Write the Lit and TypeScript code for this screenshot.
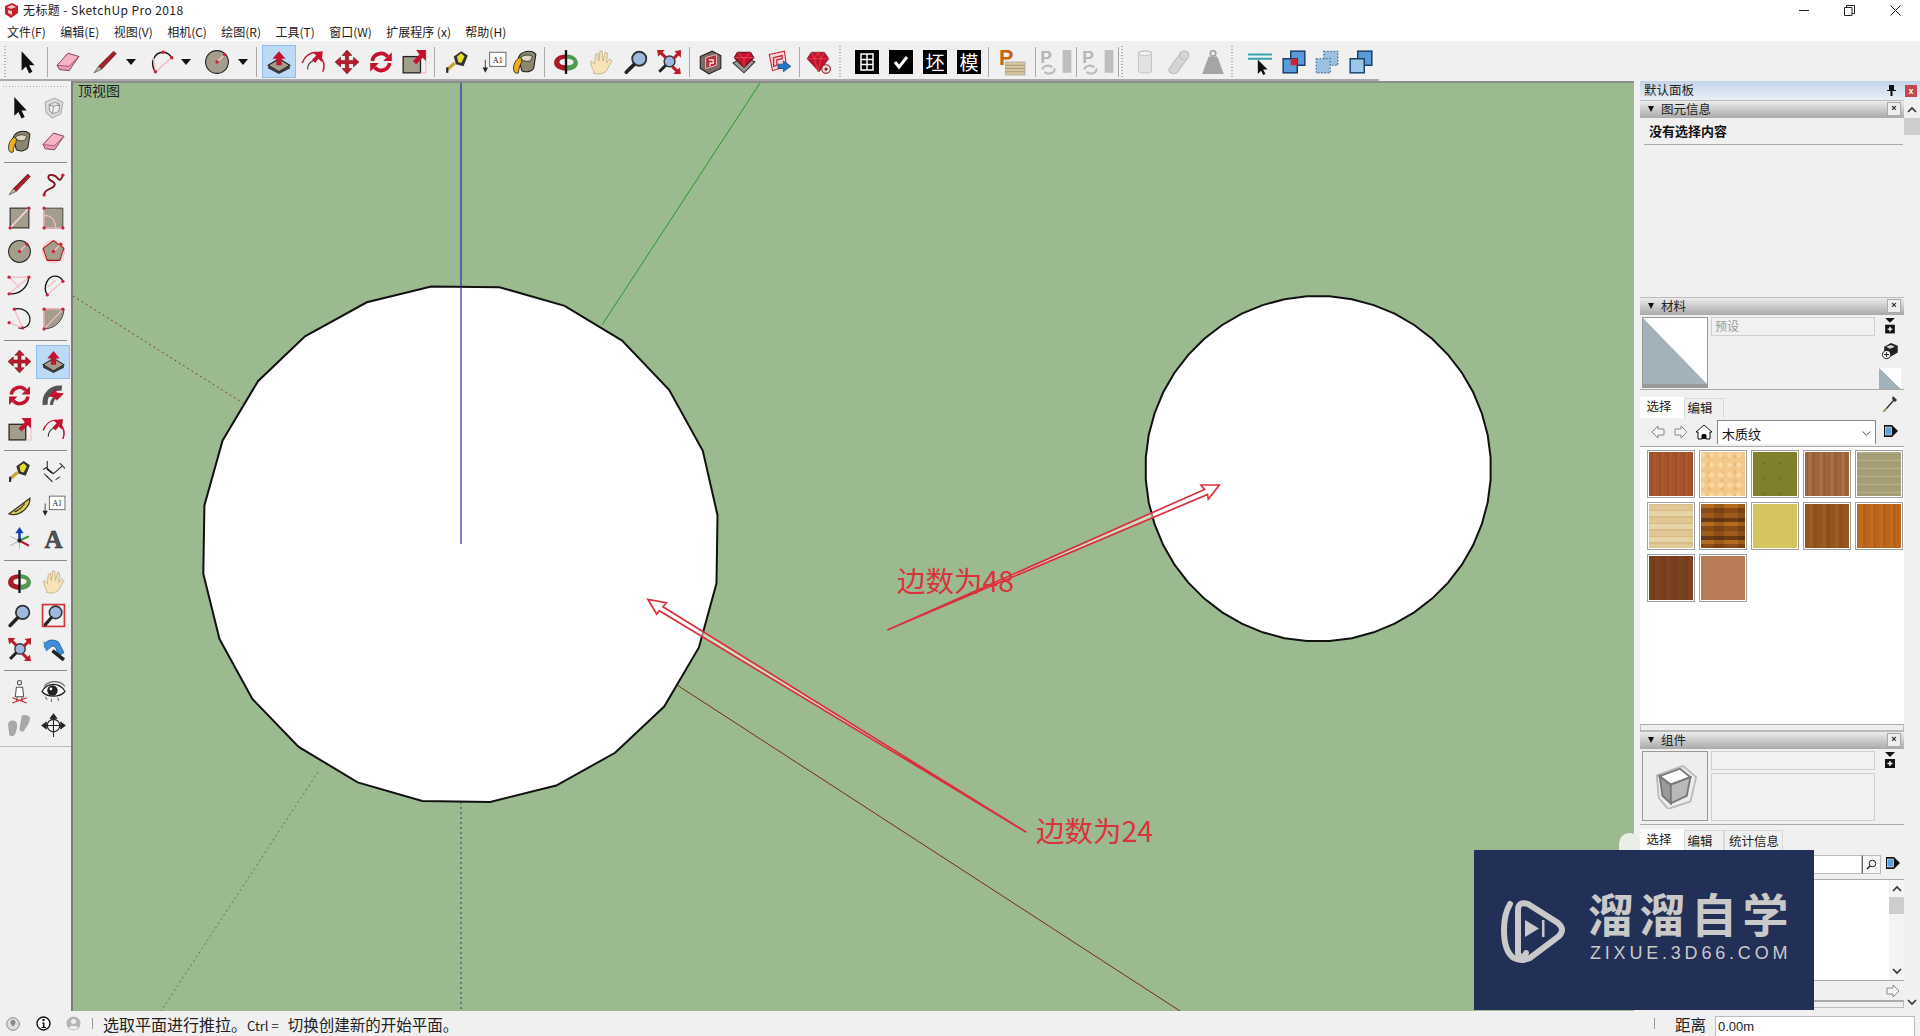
// app.ts
// SketchUp Pro 2018 main window: toolbars, top view canvas, default tray, status bar

import { LitElement, html, svg, css, TemplateResult } from 'lit';
import { customElement } from 'lit/decorators.js';

const RED = '#c4122f';
const PINK = '#f6b9c4';
const FACE = '#a39e8c';

const dot = (x: number, y: number) => svg`<circle cx=${x} cy=${y} r="1.6" fill="#d0203a"/>`;

const ICONS: Record<string, TemplateResult> = {
  select: svg`<path d="M7 2v18l4-3.8 3 6.3 3-1.4-3-6.2h5z" fill="#111"/>`,
  component: svg`<path d="M4 7l9-4 8 4-2 11-8 4-6-5z" fill="#ddd" stroke="#aaa"/><path d="M8 9l6-2 4 2-1 7-6 2-3-3zM8 9l4 2 6-2M12 11l-1 7" fill="#eee" stroke="#999"/>`,
  eraser: svg`<path d="M2 15L12 4l10 3-9 13-9-1z" fill="#f29ab3" stroke="#6e3442" stroke-width=".8"/><path d="M2 15L12 4l10 3-9 9z" fill="#f7b3c6" stroke="#6e3442" stroke-width=".6"/>`,
  pencil: svg`<path d="M20 2l2.4 2.4L9 18.5 6 16z" fill="#ae1f2b" stroke="#3a1015" stroke-width=".6"/><path d="M6 16l3 2.5L2 22z" fill="#cdb89c" stroke="#333" stroke-width=".6"/>`,
  freehand: svg`<path d="M3 22c0-6 8-5 10-9s-6-4-6-8 7-2 9 1 4 1 5-3" fill="none" stroke="#7f1822" stroke-width="1.800"/>${dot(3, 22)}${dot(21, 3)}`,
  arc: svg`<path d="M6 21C0 13 5 3 13 3c3 0 6 2 8 5" fill="none" stroke="#111" stroke-width="1.3"/><path d="M6 21L21 8" stroke=${PINK} stroke-width="1.4"/><path d="M6 21L4 8" stroke=${PINK}/>${dot(6, 21)}${dot(21, 8)}${dot(13, 3)}`,
  circle: svg`<circle cx="12" cy="12" r="10.5" fill=${FACE} stroke="#222" stroke-width="1"/><path d="M12 12L19 5" stroke=${PINK} stroke-width="1.5"/>${dot(12, 12)}${dot(19, 5)}`,
  polygon: svg`<circle cx="12" cy="12" r="10.5" fill="none" stroke=${PINK}/><path d="M12 1.5l10 7.500-4 11.500H6L2 9z" fill=${FACE} stroke="#a11"/><path d="M12 12L19 5" stroke=${PINK} stroke-width="1.5"/>${dot(12, 12)}${dot(19, 5)}`,
  rect: svg`<rect x="3" y="3" width="18" height="19" fill=${FACE} stroke="#222"/><path d="M3 22L21 3" stroke="#fbd0d8" stroke-width="1.6"/>${dot(3, 22)}${dot(21, 3)}`,
  rotrect: svg`<path d="M3 3h18v19H3z" fill=${FACE} stroke="#222" stroke-width=".7"/><path d="M3 10c7 0 11 5 11 12h7M3 3v19h11" fill="none" stroke=${PINK} stroke-width="1.2"/>${dot(3, 3)}${dot(3, 22)}${dot(21, 22)}`,
  arc1: svg`<path d="M2 20c10 1 18-6 19-16" fill="none" stroke="#111" stroke-width="1.2"/><path d="M2 20L21 4M2 4h19M2 4l10 10" stroke=${PINK} stroke-width="1.2"/>${dot(2, 4)}${dot(21, 4)}${dot(2, 20)}`,
  arc2: svg`<path d="M6 21C1 13 7 3 13 3c4 0 7 2 8 5" fill="none" stroke="#111" stroke-width="1.3"/><path d="M6 21L21 8M6 14l8-7" stroke=${PINK} stroke-width="1.2"/>${dot(6, 21)}${dot(21, 8)}`,
  arc3: svg`<path d="M7 3c8-2 15 3 15 10s-6 9-11 8" fill="none" stroke="#111" stroke-width="1.2"/><path d="M7 3l8 18M2 16l13 5" stroke=${PINK} stroke-width="1.2"/>${dot(7, 3)}${dot(15, 21)}${dot(2, 16)}`,
  pie: svg`<path d="M3 22V3h19c0 10-8 19-19 19z" fill=${FACE} stroke="#222" stroke-width=".7"/><path d="M3 22L21 3M3 3h19M3 3v19" stroke=${PINK} stroke-width="1.2"/>${dot(3, 3)}${dot(21, 3)}${dot(3, 22)}`,
  move: svg`<path d="M12 1l4.500 5h-3v4.500H18v-3l5 4.500-5 4.500v-3h-4.500V18h3L12 23l-4.500-5h3v-4.500H6v3L1 12l5-4.500v3h4.500V6h-3z" fill="#b81c2a" stroke="#5a0e14" stroke-width=".5"/>`,
  pushpull: svg`<path d="M2 15l10-6 10 6-10 6z" fill=${FACE} stroke="#222"/><path d="M2 15v3l10 5 10-5v-3l-10 6z" fill="#3a3a3a"/><path d="M12 2l6 7h-3.500v6h-5V9H6z" fill=${RED}/>`,
  rotate: svg`<path d="M4 11a8 8 0 0 1 14-4" fill="none" stroke=${RED} stroke-width="3.400"/><path d="M22 3v8h-8z" fill=${RED}/><path d="M20 13a8 8 0 0 1-14 4" fill="none" stroke=${RED} stroke-width="3.400"/><path d="M2 21v-8h8z" fill=${RED}/>`,
  followme: svg`<path d="M4 21C3 11 10 4 20 5" fill="none" stroke="#555" stroke-width="5"/><path d="M10 21c0-4 3-8 7-9" fill="none" stroke="#555" stroke-width="3"/><path d="M7 13l7-8 1 4 7 1-7 7-1-3z" fill=${RED}/>`,
  offset: svg`<path d="M2 13C4 7 9 3 15 3" fill="none" stroke=${RED} stroke-width="1.4"/><path d="M7 19c0-4 2-7 5-8" fill="none" stroke="#333"/><path d="M21 21c2-5 1-10-2-13" fill="none" stroke=${RED} stroke-width="1.4"/><path d="M21 2l-1 10-3-3-3 4-3-3 4-4-3-3z" fill=${RED}/>`,
  scale: svg`<rect x="2" y="7" width="16" height="15" fill=${FACE} stroke="#222" stroke-width="1.200"/><path d="M18 2h5v20h-5" fill="none" stroke=${PINK}/><path d="M23 1v10l-3-3-6 6-3-3 6-6-3-4z" fill=${RED}/>`,
  tape: svg`<path d="M9 7l7-5 6 4-4 10-7-2z" fill="#333"/><path d="M12 7l4-3 3 3-3 6-3-1z" fill="#e6de2c"/><path d="M10 13l-7 6" stroke="#c9a42c" stroke-width="3"/><path d="M3 17v5" stroke="#222" stroke-width="2"/>`,
  text: svg`<rect x="8" y="3" width="15" height="13" fill="#fff" stroke="#555" stroke-width=".8"/><text x="15.500" y="12.500" font-size="7.500" text-anchor="middle" font-family="Liberation Serif, serif" fill="#111">A1</text><path d="M4 10v8" stroke="#555"/><path d="M1.500 17h5L4 22z" fill="#222"/>`,
  paint: svg`<path d="M6 8c2-6 12-8 16-3l-2 13c-2 3-7 4-11 2z" fill="#8c8670" stroke="#222"/><path d="M8 8c3-3 8-3 11-1l-2 4c-3 1-6 0-8-1z" fill="#ddd8c0" stroke="#222" stroke-width=".7"/><path d="M2 21C0 15 4 9 7 8c3 0 2 4 1 6-1 2-2 5-2 8-2 1-3 0-4-1z" fill="#f0ae1e" stroke="#222" stroke-width=".8"/>`,
  orbit: svg`<path d="M12 5C4 5 1 9 1 13c0 4 5 7 11 7v-5c-4 0-6-1-6-3s3-3 6-3z" fill="#a81c28"/><path d="M13 5c6 0 10 4 10 8s-4 7-10 7v-5c4 0 6-1 6-3s-3-3-6-3z" fill="#4f9a50"/><path d="M12 1v22" stroke="#111" stroke-width="2.200"/>`,
  pan: svg`<path d="M6 22C3 16 2 13 3 11l3 3 1-9 2-1 1 7 1-9 2 0 1 9 2-8 2 1-1 9 3-4 2 2-5 9c-2 3-10 4-12 2z" fill="#f7e3b8" stroke="#b9a680" stroke-width=".7"/>`,
  zoom: svg`<circle cx="15" cy="9" r="6.500" fill="#9db9dd" stroke="#333" stroke-width="1.700"/><path d="M10 14.500L3 21.500" stroke="#222" stroke-width="3.400" stroke-linecap="round"/>`,
  zoomwin: svg`<rect x="1.500" y="1.500" width="21" height="21" fill="none" stroke="#d0343c" stroke-width="1.600"/><circle cx="14" cy="9" r="6" fill="#9db9dd" stroke="#333" stroke-width="1.500"/><path d="M10 14L4 21" stroke="#222" stroke-width="3" stroke-linecap="round"/>`,
  zoomext: svg`<circle cx="12.500" cy="11.500" r="5" fill="#9db9dd" stroke="#333" stroke-width="1.300"/><path d="M9 15l-6 6" stroke="#222" stroke-width="2.800"/><path d="M1 1h7L6 3l4 4-2 2-4-4-2 2zM23 1v7l-2-2-4 4-2-2 4-4-2-2zM23 23h-7l2-2-4-4 2-2 4 4 2-2z" fill="#b81c2a"/>`,
  prev: svg`<path d="M3 9c0-6 9-8 14-4l5 10-5 3-3-8c-3-2-6-2-9 2z" fill="#3f8fd8" stroke="#1c4f80" stroke-width=".7"/><path d="M2 4l3 10 6-5z" fill="#3f8fd8"/><path d="M11 13l11 9" stroke="#222" stroke-width="3.500"/>`,
  wh1: svg`<path d="M3 7l11-5 8 4v12l-11 5-8-5z" fill="#7a6a64" stroke="#222"/><path d="M8 8l10-3v10l-10 3z" fill="#b5303a" stroke="#ecc" stroke-width=".8"/><path d="M11 10h4v3h-3v3" fill="none" stroke="#fff"/>`,
  wh2: svg`<path d="M2 13l10-6 10 5-10 10z" fill="#999" stroke="#333"/><path d="M6 3h12l3 5-9 9-9-9z" fill="#c4122f" stroke="#5a0e14"/><path d="M6 3l6 6 6-6M3 8h18M12 9v8" stroke="#e66" stroke-width=".6" fill="none"/>`,
  wh3: svg`<path d="M3 5l14-3 2 14-13 4z" fill="#f7d9dc" stroke="#c23"/><path d="M7 8l8-2v3l-5 1v5l-3 1z" fill="none" stroke="#c23" stroke-width="1.200"/><path d="M11 14h5v-3l7 5-7 5v-3h-5z" fill="#1e78c8" stroke="#0c3c68" stroke-width=".6"/>`,
  ruby: svg`<path d="M5 3h12l4 6-9 12L1 9z" fill=${RED} stroke="#6a0e18" stroke-width=".6"/><path d="M5 3l3 6 3-6 3 6 3-6M1 9h20M8 9l3 12 3-12" stroke="#e55" stroke-width=".6" fill="none"/><circle cx="18.500" cy="18.500" r="4" fill="#ddd" stroke="#922"/><circle cx="18.500" cy="18.500" r="1.500" fill="#922"/>`,
  grid: svg`<rect width="24" height="24" fill="#000"/><path d="M6 4h12v16H6zM6 9.500h12M6 14.500h12M12 4v16" fill="none" stroke="#fff" stroke-width="1.500"/>`,
  check: svg`<rect width="24" height="24" fill="#000"/><path d="M6 12l4 5 8-10" fill="none" stroke="#fff" stroke-width="3"/>`,
  layout: svg`<text x="0" y="15" font-size="20" font-weight="700" fill="#c8620e" font-family="Liberation Sans, sans-serif">P</text><rect x="6" y="12" width="18" height="12" fill="#d9c9a0" stroke="#999" stroke-width=".6"/><path d="M6 15h18M6 18h18M6 21h18" stroke="#a89a78"/>`,
  greyp: svg`<text x="4" y="13" font-size="16" font-weight="700" fill="#b5b5b5" font-family="Liberation Sans, sans-serif">P</text><path d="M6 19a5 4 0 0 1 9-2M17 18a5 4 0 0 1-9 3" fill="none" stroke="#bbb" stroke-width="2"/>`,
  greybar: svg`<rect x="8" y="1" width="8" height="21" fill="#bdbdbd"/>`,
  cyl: svg`<path d="M6 4c0-3 12-3 12 0v16c0 3-12 3-12 0z" fill="#e2e2e2" stroke="#c6c6c6"/><ellipse cx="12" cy="4" rx="6" ry="2" fill="#f4f4f4" stroke="#c6c6c6"/>`,
  capsule: svg`<path d="M3 18L14 3c3-3 8 0 7 4L10 22c-3 2-9 0-7-4z" fill="#d5d5d5" stroke="#bbb"/><path d="M14 3c-2 2-2 6 3 7" fill="none" stroke="#bbb"/>`,
  weight: svg`<circle cx="12" cy="4" r="2.500" fill="none" stroke="#a5a5a5" stroke-width="1.600"/><path d="M8 7h8l6 16H2z" fill="#a5a5a5"/>`,
  section: svg`<path d="M1 5h22M1 9h22" stroke="#35a3ad" stroke-width="1.800"/><path d="M10 10v13l3-3 2 4 2-1-2-4h4z" fill="#111"/>`,
  solid1: svg`<rect x="9" y="2" width="13" height="13" fill="#5a9bd8" stroke="#123a66" stroke-width="1.300"/><rect x="2" y="9" width="13" height="13" fill="#5a9bd8" stroke="#123a66" stroke-width="1.300"/><rect x="9" y="9" width="6" height="6" fill="#d8202e"/>`,
  solid2: svg`<rect x="9" y="2" width="13" height="13" fill="#9cc0e0" stroke="#37648e" stroke-dasharray="1.500"/><rect x="2" y="9" width="13" height="13" fill="#9cc0e0" stroke="#37648e" stroke-dasharray="1.500"/>`,
  solid3: svg`<rect x="9" y="2" width="13" height="13" fill="#5a9bd8" stroke="#123a66" stroke-width="1.300"/><rect x="2" y="9" width="13" height="13" fill="#9cc6ea" stroke="#123a66" stroke-width="1.300"/>`,
  dim: svg`<path d="M6 2v8l5 4M2 10l4-2M5 16l6 6M18 4l5 5M20 7l-8 7-7-6" fill="none" stroke="#222" stroke-width="1"/><path d="M3 14l4 4M18 17l-4 3" stroke="#444"/>`,
  protractor: svg`<path d="M2 20L22 5C22 14 12 23 2 20z" fill="#e0d24a" stroke="#333" stroke-width="1.200"/><path d="M7 18c3 0 8-5 10-8" fill="none" stroke="#333"/>`,
  axes: svg`<path d="M12 13V3" stroke="#1a3fb0" stroke-width="2.500"/><path d="M12 0l4 6H8z" fill="#1a3fb0"/><path d="M12 13l9-4" stroke="#3a9a3a" stroke-width="2"/><path d="M12 13l9 5" stroke="#c4122f" stroke-width="2"/><path d="M12 13l-9-4M12 13l-9 5M12 13v8" stroke="#bbb"/><circle cx="12" cy="13" r="2" fill="#222"/>`,
  text3d: svg`<text x="12" y="20" font-size="24" font-weight="700" text-anchor="middle" fill="#555" stroke="#222" stroke-width=".5" font-family="Liberation Serif, serif">A</text>`,
  walk: svg`<circle cx="12" cy="3.500" r="2" fill="none" stroke="#555"/><path d="M9 8h6l1 9h-8zM10 17l-1 4M14 17l1 4" fill="#fff" stroke="#555"/><path d="M5 18l14 5M19 18L5 23" stroke="#d23"/>`,
  eye: svg`<path d="M1 12C6 3 18 3 23 12c-5 6-17 6-22 0z" fill="#fff" stroke="#222" stroke-width="1.200"/><circle cx="11" cy="11" r="5" fill="#222"/><circle cx="9.500" cy="9.500" r="1.300" fill="#fff"/><path d="M3 7C8 1 18 1 23 7M4 17l2 3M10 19v3M16 18l1 3" fill="none" stroke="#666"/>`,
  feet: svg`<path d="M1 11c0-4 6-5 8-2s0 7-1 11c-1 3-6 3-6 0zM14 3c2-2 8-1 8 2 0 4-3 8-5 11-1 3-5 2-5-1z" fill="#a8a8a8"/>`,
  position: svg`<circle cx="12" cy="12" r="6" fill="none" stroke="#222" stroke-width="1.200"/><path d="M1 12h22M12 1v22M1 12l4-3v6zM23 12l-4-3v6zM12 1l-3 4h6z" fill="#222" stroke="#222"/>`,
};

const icon = (name: string, size = 26) =>
  html`<svg class="ic" width=${size} height=${size} viewBox="0 0 24 24">${ICONS[name]}</svg>`;

// [kind or icon name, slot width]; the slots add up to the 1379px the toolbar spans
const TOP_ITEMS: [string, number][] = [
  ['grip', 10], ['select', 34], ['sep', 6], ['eraser', 36], ['pencil', 38], ['dd', 14], ['gap', 7],
  ['arc', 34], ['dd', 14], ['gap', 7], ['circle', 34], ['dd', 18], ['sep', 8], ['gap', 2],
  ['pushpull', 34], ['offset', 34], ['move', 34], ['rotate', 33], ['scale', 34], ['sep', 6],
  ['tape', 40], ['text', 34], ['paint', 28], ['sep', 10],
  ['orbit', 34], ['pan', 36], ['zoom', 34], ['zoomext', 32], ['sep', 8],
  ['wh1', 34], ['wh2', 34], ['wh3', 36], ['sep', 4], ['ruby', 36], ['grip', 6], ['gap', 7],
  ['grid', 34], ['check', 34], ['坯', 34], ['模', 34], ['sep', 4],
  ['layout', 44], ['sep', 2], ['greyp', 26], ['greybar', 10], ['sep', 8], ['greyp', 22], ['greybar', 14], ['sep', 4],
  ['grip', 4], ['gap', 4], ['cyl', 34], ['capsule', 34], ['weight', 34], ['grip', 4], ['gap', 9],
  ['section', 34], ['solid1', 33], ['solid2', 34], ['solid3', 34],
];

const LEFT_GROUPS: string[][] = [
  ['select', 'component', 'paint', 'eraser'],
  ['pencil', 'freehand', 'rect', 'rotrect', 'circle', 'polygon', 'arc1', 'arc2', 'arc3', 'pie'],
  ['move', 'pushpull', 'rotate', 'followme', 'scale', 'offset'],
  ['tape', 'dim', 'protractor', 'text', 'axes', 'text3d'],
  ['orbit', 'pan', 'zoom', 'zoomwin', 'zoomext', 'prev'],
  ['walk', 'eye', 'feet', 'position'],
];

const MENUS = ['文件(F)', '编辑(E)', '视图(V)', '相机(C)', '绘图(R)', '工具(T)', '窗口(W)', '扩展程序 (x)', '帮助(H)'];

// traced from the reference, in page coordinates
const POLY24 =
  '431.3,286.5 499.4,287.2 564.6,305.8 622.1,340.6 669.1,389.8 702.8,450.8 717.5,515.2 716.5,583.3 ' +
  '698.9,647.4 664.2,706.6 615.1,752.8 556.2,785.5 490.2,802 422.2,801 357.7,782.4 298.7,746.9 ' +
  '252.4,699 219.5,639.1 203.3,573.7 204.4,505.5 222.6,440.4 258,381.2 305,336.4 366.8,302.3';

const POLY48 = Array.from({ length: 48 }, (_, i) => {
  const a = ((i + 0.5) / 48) * Math.PI * 2;
  return `${(1318.2 + 172.8 * Math.cos(a)).toFixed(1)},${(468.7 + 172.8 * Math.sin(a)).toFixed(1)}`;
}).join(' ');

const chevron = (up: boolean) => html`<svg width="10" height="7" viewBox="0 0 10 7">
  <path d=${up ? 'M1 6l4-4 4 4' : 'M1 1l4 4 4-4'} fill="none" stroke="#333" stroke-width="1.600"/></svg>`;

const saveIcon = html`<svg width="12" height="18" viewBox="0 0 12 18">
  <path d="M1 1h10L6 6z" fill="#111"/><rect x="1" y="8" width="10" height="9" fill="#111"/><path d="M6 10v5M3.500 12.500h5" stroke="#fff" stroke-width="1.400"/></svg>`;

const detailIcon = html`<svg width="16" height="16" viewBox="0 0 16 16">
  <path d="M1 2h8l6 6-6 6H1z" fill="#111"/><rect x="2.500" y="4" width="6" height="8" fill="#5f9fdc" stroke="#fff" stroke-width=".6"/></svg>`;

const navArrow = (back: boolean) => html`<svg width="14" height="14" viewBox="0 0 14 14">
  <path d=${back ? 'M1 7l6-6v3h6v6H7v3z' : 'M13 7L7 1v3H1v6h6v3z'} fill="#f4f4f4" stroke="#888"/></svg>`;

@customElement('app-root')
export class AppRoot extends LitElement {
  static styles = css`
    :host {
      display: block;
      position: relative;
      width: 1920px;
      height: 1036px;
      overflow: hidden;
      background: #f0f0f0;
      color: #111;
      font-family: 'Noto Sans CJK SC', 'Liberation Sans', sans-serif;
      font-size: 12px;
    }
    .app { display: flex; flex-direction: column; height: 1036px; }
    .ic { flex: none; overflow: visible; }

    .title { height: 22px; display: flex; align-items: center; background: #fff; padding: 0 2px 2px 4px; box-sizing: border-box; line-height: 1; color: #222; }
    .title .name { flex: 1; margin-left: 5px; letter-spacing: .42px; }
    .winbtn { width: 45.500px; height: 20px; display: flex; align-items: center; justify-content: center; }

    .menu { height: 19px; display: flex; align-items: center; background: #fff; padding-left: 7px; gap: 14.400px; line-height: 1; color: #222; }

    .top { height: 40px; display: flex; background: #f0f0f0; }
    .top-items { display: flex; align-items: flex-start; padding-top: 4px; height: 40px; box-sizing: border-box; width: 1379px; border-bottom: 2px solid #a8a8a8; }
    .slot { height: 33px; display: flex; align-items: center; justify-content: center; flex: none; box-sizing: border-box; }
    .slot.on { background: #bcdaf5; border: 1px solid #8fbde6; }
    .sep-v { width: 1px; height: 30px; background: #a8a8a8; }
    .grip-v { width: 2px; height: 32px; background: repeating-linear-gradient(#b0b0b0 0 1px, transparent 1px 3px); }
    .tri { width: 0; height: 0; border-left: 5px solid transparent; border-right: 5px solid transparent; border-top: 6px solid #111; }
    .sq { width: 24px; height: 24px; background: #000; color: #fff; font-size: 19px; line-height: 24px; text-align: center; }

    .main { flex: 1; display: flex; min-height: 0; }

    .left { width: 71px; flex: none; display: flex; flex-direction: column; background: #f0f0f0; padding-top: 2px; box-sizing: border-box; }
    .grip-h { height: 8px; margin: 0 3px; background: repeating-linear-gradient(90deg, #b0b0b0 0 1px, transparent 1px 3px) 0 3px / auto 1px no-repeat; }
    .lgroup { display: grid; grid-template-columns: 34px 34px; grid-auto-rows: 33.700px; padding-left: 2px; }
    .lgroup .cell { display: flex; align-items: center; justify-content: center; box-sizing: border-box; }
    .lgroup .cell.on { background: #bcdaf5; border: 1px solid #8fbde6; }
    .sep-h { height: 1px; margin: 4px 4px; background: #8a8a8a; }
    .left .end { border-top: 1px solid #bbb; margin-top: 4px; }

    .canvas { flex: 1; position: relative; background: #9bba8f; border-left: 2px solid #7c7c7c; border-top: 2px solid #8c8c8c; overflow: hidden; }
    .canvas svg.scene { position: absolute; inset: 0; }
    .view-name { position: absolute; left: 5px; top: 0; font-size: 14px; line-height: 14px; color: #222; }
    .label { position: absolute; font-size: 28.500px; line-height: 34px; color: #d9333c; white-space: nowrap; }
    .label.l48 { left: 824px; top: 480px; }
    .label.l24 { left: 963px; top: 730px; }

    .tray { width: 286px; flex: none; padding-left: 6px; box-sizing: border-box; overflow: hidden; }
    .tray-title { height: 19px; display: flex; align-items: center; padding: 0 0 0 4px; box-sizing: border-box; background: linear-gradient(#c3d4e8, #e8eff7); color: #222; line-height: 1; font-size: 12.500px; }
    .tray-title .t { flex: 1; }
    .pin { margin-right: 9px; }
    .x-red { width: 12px; height: 12px; background: #c0484e; color: #fff; font: 700 9px/12px 'Liberation Sans', sans-serif; text-align: center; margin-right: 3px; }
    .tray-body { display: flex; }
    .tray-col { width: 264px; flex: none; }
    .tray-scroll { width: 16px; flex: none; display: flex; flex-direction: column; align-items: center; height: 911px; position: relative; }
    .tray-scroll .cv { height: 18px; display: flex; align-items: center; }
    .tray-scroll .thumb { width: 100%; height: 17px; background: #cdcdcd; }
    .tray-scroll .grow { flex: 1; }

    .head { height: 18px; display: flex; align-items: center; padding: 0 0 1px 8px; background: linear-gradient(#ececec, #a9a9a9); border-top: 1px solid #bbb; box-sizing: border-box; color: #222; line-height: 1; font-size: 12.500px; }
    .head .arrow { width: 0; height: 0; border-left: 3.5px solid transparent; border-right: 3.5px solid transparent; border-top: 6px solid #111; margin-right: 7px; }
    .head .t { flex: 1; }
    .head .x { width: 12px; height: 12px; border: 1px solid #aaa; background: #eee; margin-right: 3px; font: 700 9px/11px 'Liberation Sans', sans-serif; text-align: center; }

    .info { height: 179px; }
    .info .msg { height: 27px; margin: 0 1px 0 4px; padding-left: 5px; border-bottom: 1px solid #aaa; box-sizing: border-box; font-size: 13px; font-weight: 700; line-height: 26px; }

    .panel-row { display: flex; padding: 2px 0 0 2px; box-sizing: border-box; border-bottom: 1px solid #aaa; }
    .mat { height: 75px; }
    .comp { height: 76px; }
    .thumb-box { width: 66px; height: 71px; border: 1px solid #999; box-sizing: border-box; background: #eee; flex: none; position: relative; overflow: hidden; }
    .thumb-box.mat-t { background: linear-gradient(to top right, #a3b1bb 49.500%, #fff 50.500%); border-bottom-width: 4px; }
    .thumb-box.comp-t { display: flex; align-items: center; justify-content: center; height: 70px; }
    .fields { width: 164px; margin-left: 3px; flex: none; display: flex; flex-direction: column; gap: 3px; }
    .field { height: 19px; border: 1px solid #cfcfcf; box-sizing: border-box; padding-left: 3px; color: #999; line-height: 15px; background: #f1f1f1; }
    .field.big { height: 48px; }
    .side { flex: 1; display: flex; flex-direction: column; align-items: center; gap: 8px; padding-left: 1px; }
    .mini { width: 22px; height: 22px; background: linear-gradient(to top right, #a3b1bb 49.500%, #fff 50.500%); }

    .tabs { display: flex; align-items: flex-end; }
    .tabs .tab { height: 20px; padding: 0 10px 0 2.500px; border: 1px solid #d8d8d8; border-bottom: 0; box-sizing: border-box; color: #222; font-size: 12.500px; }
    .tabs .tab.on { background: #fff; border: 0; height: 21px; padding: 0 12.500px 0 6.500px; }
    .tabs .tab.w3 { padding: 0 3px 0 4.500px; }
    .tabs .fill { flex: 1; display: flex; justify-content: flex-end; padding-right: 6px; align-self: center; }
    .tabs.a { height: 28px; }
    .tabs.a .tab { line-height: 17px; }
    .tabs.b { height: 25px; }
    .tabs.b .tab { line-height: 20px; }

    .nav { height: 29px; display: flex; align-items: center; border-bottom: 1px solid #aaa; box-sizing: border-box; padding-left: 11px; }
    .nav .gap { width: 9px; }
    .home { margin: 0 5px 0 8px; }
    .select { width: 159px; height: 24px; background: #fff; border: 1px solid #888; border-bottom: 0; box-sizing: border-box; display: flex; align-items: center; padding: 1px 4px 0; color: #111; justify-content: space-between; font-size: 13px; }
    .nav .det { margin-left: 7px; }

    .grid { height: 277px; background: #fff; box-sizing: border-box; padding: 3px 0 0 7px; display: grid; grid-template-columns: repeat(5, 48px); grid-auto-rows: 48px; gap: 4px; overflow: hidden; }
    .sw { border: 1px solid #a0a0a0; box-sizing: border-box; box-shadow: inset 0 0 0 1px #fff; }
    .t1 { background: repeating-linear-gradient(90deg, #a5532a 0 3px, #a04e28 3px 5px, #a9572b 5px 8px); }
    .t2 { background: radial-gradient(circle at 30% 40%, #f9d9a2 0 2px, transparent 3px) 0 0 / 9px 10px, radial-gradient(circle at 70% 70%, #eabb78 0 1.500px, transparent 2.500px) 0 0 / 13px 8px, #f4c88a; }
    .t3 { background: radial-gradient(circle, #666a22 0 .8px, transparent 1.200px) 3px 5px / 17px 15px, #7f8029; }
    .t4 { background: repeating-linear-gradient(90deg, #a0663e 0 3px, #93603a 3px 4px, #a86e44 4px 8px, #98603a 8px 11px); }
    .t5 { background: repeating-linear-gradient(0deg, #a89f78 0 2px, #9c9670 2px 3px, #b0a880 3px 6px, #a39c74 6px 8px); }
    .t6 { background: repeating-linear-gradient(0deg, #e0c894 0 5px, #d8bc84 5px 7px, #e6d4a6 7px 12px, #d6ba82 12px 13px); }
    .t7 { background: repeating-linear-gradient(90deg, transparent 0 14px, rgba(60, 25, 5, .2) 14px 24px), repeating-linear-gradient(0deg, #8a4a18 0 5px, #b56c1e 5px 9px, #6a3a14 9px 13px, #a05a1c 13px 18px); }
    .t8 { background: #d6c45e; }
    .t9 { background: repeating-linear-gradient(90deg, #94561f 0 5px, #9c5d21 5px 9px, #8d501d 9px 13px); }
    .t10 { background: repeating-linear-gradient(90deg, #bb661d 0 4px, #c26c1e 4px 7px, #b4601b 7px 10px); }
    .t11 { background: repeating-linear-gradient(90deg, #7a3f1f 0 4px, #763c1d 4px 7px, #7e4221 7px 11px); }
    .t12 { background: #b97a58; }

    .bar { height: 7px; border: 1px solid #bbb; border-top-color: #aaa; background: #efefef; box-sizing: border-box; }

    .search { height: 30px; display: flex; align-items: center; border-bottom: 1px solid #aaa; box-sizing: border-box; }
    .search .inp { width: 222px; height: 19px; background: #fff; border: 1px solid #bbb; box-sizing: border-box; }
    .search .mag { width: 19px; height: 19px; background: #f6f6f6; border: 1px solid #bbb; border-left: 1px solid #666; box-sizing: border-box; display: flex; align-items: center; justify-content: center; }
    .search .det { margin-left: 4px; }
    .list { height: 101px; background: #fff; display: flex; justify-content: flex-end; border-bottom: 1px solid #aaa; box-sizing: border-box; }
    .list .sb { width: 15px; display: flex; flex-direction: column; align-items: center; background: #f4f4f4; }
    .list .sb .cv { height: 17px; display: flex; align-items: center; }
    .list .sb .thumb { width: 100%; height: 17px; background: #cdcdcd; }
    .list .sb .grow { flex: 1; }
    .row { height: 20px; display: flex; align-items: center; justify-content: flex-end; padding-right: 4px; border-bottom: 1px solid #aaa; box-sizing: border-box; }

    .status { height: 25px; flex: none; display: flex; background: #f0f0f0; align-items: center; }
    .st-ic { width: 30px; display: flex; justify-content: center; }
    .st-first { margin-left: -2px; }
    .st-sep { width: 1px; height: 11px; background: #999; margin: 0 10px 0 4px; }
    .st-text { flex: 1; font-size: 16px; white-space: nowrap; color: #222; line-height: 1; padding-top: 2px; }
    .st-text .lat { font-size: 13px; margin: 0 9px 0 0; }
    .st-text .rest { font-size: 15.500px; }
    .st-dist { font-size: 15.500px; margin: 3px 9px 0 10px; color: #222; line-height: 1; }
    .st-input { width: 200px; height: 20px; margin: 5px 5px 0 0; border: 1px solid #bbb; border-bottom: 0; background: #fff; box-sizing: border-box; padding-left: 2px; font: 13px/20px 'Liberation Sans', sans-serif; color: #222; }

    .watermark { position: absolute; left: 1474px; top: 850px; width: 340px; height: 160px; background: #222f56; display: flex; color: #c9c9c9; }
    .watermark svg { margin: 45px 0 0 26px; flex: none; }
    .wm-text { margin: 33px 0 0 20px; }
    .wm-cn { font-size: 46px; font-weight: 700; letter-spacing: 5.500px; line-height: 58px; white-space: nowrap; }
    .wm-en { font: 18px/18px 'Liberation Sans', sans-serif; letter-spacing: 3.800px; white-space: nowrap; margin: 3px 0 0 2px; }
    .pale-tab { position: absolute; left: 1619px; top: 833px; width: 21px; height: 18px; border-radius: 11px 11px 0 0; background: #e9efe6; }
  `;

  private head(label: string) {
    return html`<div class="head"><span class="arrow"></span><span class="t">${label}</span><span class="x">×</span></div>`;
  }

  private topItem([name, w]: [string, number]) {
    const slot = (inner: unknown, cls = '') => html`<div class="slot ${cls}" style="width:${w}px">${inner}</div>`;
    if (name === 'gap') return slot('');
    if (name === 'sep') return slot(html`<div class="sep-v"></div>`);
    if (name === 'grip') return slot(html`<div class="grip-v"></div>`);
    if (name === 'dd') return slot(html`<div class="tri"></div>`);
    if (name === '坯' || name === '模') return slot(html`<div class="sq">${name}</div>`);
    const square = name === 'grid' || name === 'check';
    return slot(icon(name, square ? 24 : 26), name === 'pushpull' ? 'on' : '');
  }

  render() {
    const swatches = Array.from({ length: 12 }, (_, i) => `t${i + 1}`);
    return html`
      <div class="app">
        <div class="title">
          <svg width="14" height="15" viewBox="0 0 14 15"><path d="M1 3l7-3 6 3v7l-7 5-6-4z" fill="#c4202c"/><path d="M3 4l5-2 4 2-5 2zM4 7l4 1v4l-4-2z" fill="#f3c7c9"/></svg>
          <span class="name">无标题 - SketchUp Pro 2018</span>
          <div class="winbtn"><svg width="11" height="11"><path d="M0 5.500h10" stroke="#222"/></svg></div>
          <div class="winbtn"><svg width="11" height="11"><path d="M.5 2.500h7.500v8H.5zM2.500 2.500v-2h8v8H8" fill="none" stroke="#222"/></svg></div>
          <div class="winbtn"><svg width="11" height="11"><path d="M.5.500l10 10M10.500.500l-10 10" stroke="#222"/></svg></div>
        </div>
        <div class="menu">${MENUS.map(m => html`<span>${m}</span>`)}</div>
        <div class="top"><div class="top-items">${TOP_ITEMS.map(it => this.topItem(it))}</div></div>

        <div class="main">
          <div class="left">
            <div class="grip-h"></div>
            ${LEFT_GROUPS.map((group, i) => html`
              ${i > 0 ? html`<div class="sep-h"></div>` : ''}
              <div class="lgroup">
                ${group.map(name => html`<div class="cell ${name === 'pushpull' ? 'on' : ''}">${icon(name, 25)}</div>`)}
              </div>
            `)}
            <div class="end"></div>
          </div>

          <div class="canvas">
            <svg class="scene" width="1561" height="928" viewBox="73 83 1561 928">
              <line x1="73" y1="296" x2="243" y2="403" stroke="#8a3b2c" stroke-width="1" stroke-dasharray="2 3"/>
              <line x1="677" y1="685" x2="1180" y2="1011" stroke="#7a2a14" stroke-width="1"/>
              <line x1="602" y1="325" x2="760" y2="83" stroke="#1f9a2a" stroke-width="1"/>
              <line x1="318" y1="772" x2="161" y2="1011" stroke="#3d8a45" stroke-width="1" stroke-dasharray="2 3"/>
              <line x1="461" y1="802" x2="461" y2="1011" stroke="#26406a" stroke-width="1" stroke-dasharray="2 3"/>
              <polygon points=${POLY24} fill="#fff" stroke="#111" stroke-width="2"/>
              <polygon points=${POLY48} fill="#fff" stroke="#111" stroke-width="2"/>
              <line x1="461" y1="83" x2="461" y2="544" stroke="#2a2ab8" stroke-width="1.200"/>
              <polygon points="1026.4,832.300 662.900,606.700 666.400,602.700 647.900,599.300 656.800,614.300 659.300,610.700" fill="#fff" fill-opacity=".5" stroke="#d9303c" stroke-width="1.700" stroke-linejoin="miter"/>
              <polygon points="887.300,630 1204.500,489.500 1201,485 1219.300,485 1208.300,499.300 1207.500,494.500" fill="#fff" fill-opacity=".5" stroke="#d9303c" stroke-width="1.700" stroke-linejoin="miter"/>
            </svg>
            <div class="view-name">顶视图</div>
            <div class="label l48">边数为48</div>
            <div class="label l24">边数为24</div>
          </div>

          <div class="tray">
            <div class="tray-title">
              <span class="t">默认面板</span>
              <svg class="pin" width="9" height="11" viewBox="0 0 9 11"><path d="M2 0h5v5h2v1H5.500v5h-2V6H0V5h2z" fill="#111"/></svg>
              <span class="x-red">x</span>
            </div>
            <div class="tray-body">
              <div class="tray-col">
                ${this.head('图元信息')}
                <div class="info"><div class="msg">没有选择内容</div></div>

                ${this.head('材料')}
                <div class="panel-row mat">
                  <div class="thumb-box mat-t"></div>
                  <div class="fields"><div class="field">预设</div></div>
                  <div class="side">
                    ${saveIcon}
                    <svg width="18" height="18" viewBox="0 0 18 18"><path d="M3 5l7-4 7 3v7l-7 4-7-3z" fill="#222"/><path d="M5 5l5-2 4 2-5 2z" fill="#ddd"/><circle cx="5.500" cy="13" r="4.300" fill="#fff" stroke="#111"/><path d="M5.500 10.500v5M3 13h5" stroke="#111"/></svg>
                    <div class="mini"></div>
                  </div>
                </div>
                <div class="tabs a">
                  <span class="tab on">选择</span><span class="tab">编辑</span>
                  <span class="fill"><svg width="16" height="18" viewBox="0 0 16 18"><path d="M11 1l4 4-2 2-1-1-7 8-3 3-1-1 3-3 7-8-1-1z" fill="#333"/><path d="M1 17l3-4 1 1-3 3z" fill="#c9a868"/></svg></span>
                </div>
                <div class="nav">
                  ${navArrow(true)}<span class="gap"></span>${navArrow(false)}
                  <svg class="home" width="16" height="16" viewBox="0 0 16 16"><path d="M8 1L0 8h2v7h4v-4h4v4h4V8h2z" fill="#fff" stroke="#111"/><rect x="6" y="10" width="4" height="5" fill="#111"/></svg>
                  <div class="select"><span>木质纹</span><svg width="9" height="5"><path d="M.5.500l4 3.500 4-3.500" fill="none" stroke="#555"/></svg></div>
                  <span class="det">${detailIcon}</span>
                </div>
                <div class="grid">${swatches.map(s => html`<div class="sw ${s}"></div>`)}</div>
                <div class="bar"></div>

                ${this.head('组件')}
                <div class="panel-row comp">
                  <div class="thumb-box comp-t">
                    <svg width="43" height="45" viewBox="0 0 46 48">
                      <path d="M3 12l28-10 14 12-6 26-24 8L5 36z" fill="none" stroke="#bbb" stroke-width="2"/>
                      <path d="M6 13L28 5l11 9-21 8z" fill="#fff" stroke="#777" stroke-width="2"/>
                      <path d="M6 13l12 9 0 20-9-8z" fill="#9a9a9a" stroke="#777" stroke-width="2"/>
                      <path d="M18 22l21-8-4 20-17 8z" fill="#b9b9b9" stroke="#777" stroke-width="2"/>
                    </svg>
                  </div>
                  <div class="fields"><div class="field"></div><div class="field big"></div></div>
                  <div class="side">${saveIcon}</div>
                </div>
                <div class="tabs b">
                  <span class="tab on">选择</span><span class="tab">编辑</span><span class="tab w3">统计信息</span>
                </div>
                <div class="search">
                  <div class="inp"></div>
                  <div class="mag"><svg width="11" height="11" viewBox="0 0 11 11"><circle cx="6.500" cy="4.500" r="3.300" fill="none" stroke="#222"/><path d="M4 7L1 10" stroke="#222" stroke-width="1.500"/></svg></div>
                  <span class="det">${detailIcon}</span>
                </div>
                <div class="list">
                  <div class="sb">
                    <div class="cv">${chevron(true)}</div><div class="thumb"></div><div class="grow"></div><div class="cv">${chevron(false)}</div>
                  </div>
                </div>
                <div class="row">${navArrow(false)}</div>
                <div class="bar"></div>
              </div>
              <div class="tray-scroll">
                <div class="cv">${chevron(true)}</div>
                <div class="thumb"></div>
                <div class="grow"></div>
                <div class="cv">${chevron(false)}</div>
              </div>
            </div>
          </div>
        </div>

        <div class="status">
          <div class="st-ic st-first"><svg width="14" height="14" viewBox="0 0 14 14"><circle cx="7" cy="7" r="6.300" fill="#ddd" stroke="#888"/><path d="M4.500 5.500a2.500 2.500 0 1 1 5 0c0 1.500-1.500 2-1.500 3.500H6c0-1.500-1.500-2-1.500-3.500z" fill="#888"/></svg></div>
          <div class="st-ic"><svg width="15" height="15" viewBox="0 0 15 15"><circle cx="7.500" cy="7.500" r="6.500" fill="#fff" stroke="#111" stroke-width="1.400"/><circle cx="7.500" cy="4" r="1.200" fill="#111"/><path d="M6 6.500h2.500V11H10v1H5.500v-1H7V7.500H6z" fill="#111"/></svg></div>
          <div class="st-ic"><svg width="15" height="15" viewBox="0 0 15 15"><circle cx="7.500" cy="7.500" r="7" fill="#b5b5b5"/><circle cx="7.500" cy="5.500" r="2.500" fill="#eee"/><path d="M3 12c1-3 8-3 9 0-2 2-7 2-9 0z" fill="#eee"/></svg></div>
          <div class="st-sep"></div>
          <div class="st-text">选取平面进行推拉。<span class="lat">Ctrl =</span><span class="rest">切换创建新的开始平面。</span></div>
          <div class="st-sep"></div>
          <div class="st-dist">距离</div>
          <div class="st-input">0.00m</div>
        </div>
      </div>

      <div class="pale-tab"></div>
      <div class="watermark">
        <svg width="68" height="72" viewBox="26 45 68 72">
          <path d="M52 103a4 4 0 0 1-8-1V60q0-9 10-6l30 19q8 7 0 14L56 108q-9 4-16 0q-10-6-10-28q0-16 6-26" fill="none" stroke="#c9c9c9" stroke-width="6" stroke-linecap="round"/>
          <path d="M51 70l14 8.500L51 87z" fill="#c9c9c9"/>
          <rect x="68" y="70" width="2.500" height="17" fill="#c9c9c9"/>
        </svg>
        <div class="wm-text">
          <div class="wm-cn">溜溜自学</div>
          <div class="wm-en">ZIXUE.3D66.COM</div>
        </div>
      </div>
    `;
  }
}

declare global {
  interface HTMLElementTagNameMap {
    'app-root': AppRoot;
  }
}
